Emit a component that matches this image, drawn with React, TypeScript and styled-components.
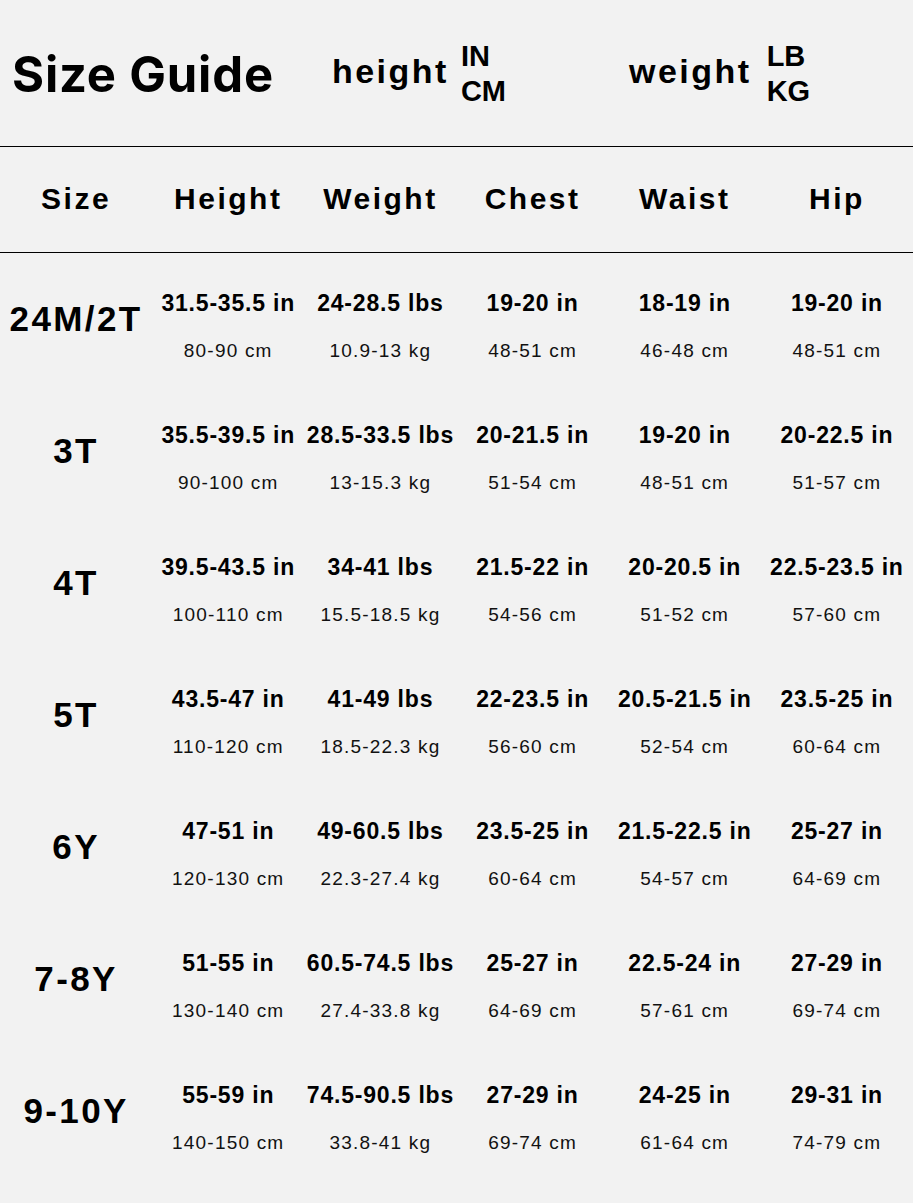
import styled, { createGlobalStyle } from "styled-components";

const GlobalStyle = createGlobalStyle`
  html, body {
    margin: 0;
    padding: 0;
    background: #f2f2f2;
  }
  #root {
    width: 913px;
    min-height: 1203px;
    background: #f2f2f2;
  }
`;

const columns = ["Size", "Height", "Weight", "Chest", "Waist", "Hip"];

const rows = [
  {
    size: "24M/2T",
    values: [
      ["31.5-35.5 in", "80-90 cm"],
      ["24-28.5 lbs", "10.9-13 kg"],
      ["19-20 in", "48-51 cm"],
      ["18-19 in", "46-48 cm"],
      ["19-20 in", "48-51 cm"],
    ],
  },
  {
    size: "3T",
    values: [
      ["35.5-39.5 in", "90-100 cm"],
      ["28.5-33.5 lbs", "13-15.3 kg"],
      ["20-21.5 in", "51-54 cm"],
      ["19-20 in", "48-51 cm"],
      ["20-22.5 in", "51-57 cm"],
    ],
  },
  {
    size: "4T",
    values: [
      ["39.5-43.5 in", "100-110 cm"],
      ["34-41 lbs", "15.5-18.5 kg"],
      ["21.5-22 in", "54-56 cm"],
      ["20-20.5 in", "51-52 cm"],
      ["22.5-23.5 in", "57-60 cm"],
    ],
  },
  {
    size: "5T",
    values: [
      ["43.5-47 in", "110-120 cm"],
      ["41-49 lbs", "18.5-22.3 kg"],
      ["22-23.5 in", "56-60 cm"],
      ["20.5-21.5 in", "52-54 cm"],
      ["23.5-25 in", "60-64 cm"],
    ],
  },
  {
    size: "6Y",
    values: [
      ["47-51 in", "120-130 cm"],
      ["49-60.5 lbs", "22.3-27.4 kg"],
      ["23.5-25 in", "60-64 cm"],
      ["21.5-22.5 in", "54-57 cm"],
      ["25-27 in", "64-69 cm"],
    ],
  },
  {
    size: "7-8Y",
    values: [
      ["51-55 in", "130-140 cm"],
      ["60.5-74.5 lbs", "27.4-33.8 kg"],
      ["25-27 in", "64-69 cm"],
      ["22.5-24 in", "57-61 cm"],
      ["27-29 in", "69-74 cm"],
    ],
  },
  {
    size: "9-10Y",
    values: [
      ["55-59 in", "140-150 cm"],
      ["74.5-90.5 lbs", "33.8-41 kg"],
      ["27-29 in", "69-74 cm"],
      ["24-25 in", "61-64 cm"],
      ["29-31 in", "74-79 cm"],
    ],
  },
];

const App = () => {
  return (
    <>
      <GlobalStyle />
      <Page>
        <TopBar>
          <Title>Size Guide</Title>
          <UnitGroup>
            <UnitLabel>height</UnitLabel>
            <UnitStack>
              <span>IN</span>
              <span>CM</span>
            </UnitStack>
          </UnitGroup>
          <UnitGroup $last>
            <UnitLabel>weight</UnitLabel>
            <UnitStack>
              <span>LB</span>
              <span>KG</span>
            </UnitStack>
          </UnitGroup>
        </TopBar>

        <HeadRow>
          {columns.map((c) => (
            <HeadCell key={c}>{c}</HeadCell>
          ))}
        </HeadRow>

        {rows.map((r) => (
          <Row key={r.size}>
            <SizeCell>{r.size}</SizeCell>
            {r.values.map(([main, sub], i) => (
              <ValueCell key={i}>
                <Main>{main}</Main>
                <Sub>{sub}</Sub>
              </ValueCell>
            ))}
          </Row>
        ))}
      </Page>
    </>
  );
};

export default App;

const Page = styled.div`
  width: 913px;
  color: #000;
  font-family: "Liberation Sans", Arial, sans-serif;
`;

const TopBar = styled.header`
  height: 146px;
  border-bottom: 1px solid #000;
  display: flex;
  align-items: center;
  padding: 0 0 0 12px;
  box-sizing: content-box;
`;

const Title = styled.h1`
  margin: 0 58px 0 0;
  font-family: Inter, Roboto, "Liberation Sans", sans-serif;
  font-weight: 700;
  font-size: 49px;
  line-height: 1;
  letter-spacing: 0.8px;
  white-space: nowrap;
  padding-top: 3px;
`;

const UnitGroup = styled.div<{ $last?: boolean }>`
  display: flex;
  align-items: center;
  gap: ${(p) => (p.$last ? 15 : 12)}px;
  margin-right: ${(p) => (p.$last ? 0 : 123)}px;
`;

const UnitLabel = styled.span`
  font-weight: 700;
  font-size: 34px;
  letter-spacing: 2.5px;
  line-height: 1;
  padding-bottom: 4px;
`;

const UnitStack = styled.div`
  display: flex;
  flex-direction: column;
  font-weight: 700;
  font-size: 29px;
  line-height: 35px;
  padding-top: 2px;
`;

const HeadRow = styled.div`
  display: grid;
  grid-template-columns: repeat(6, minmax(0, 1fr));
  height: 105px;
  border-bottom: 1px solid #000;
  align-items: center;
`;

const HeadCell = styled.div`
  text-align: center;
  font-weight: 700;
  font-size: 30px;
  letter-spacing: 2.5px;
  white-space: nowrap;
  padding-bottom: 2px;
`;

const Row = styled.div`
  display: grid;
  grid-template-columns: repeat(6, minmax(0, 1fr));
  height: 132px;
`;

const SizeCell = styled.div`
  display: flex;
  align-items: center;
  justify-content: center;
  font-weight: 700;
  font-size: 35px;
  letter-spacing: 2.4px;
  white-space: nowrap;
  padding-bottom: 1px;
`;

const ValueCell = styled.div`
  display: flex;
  flex-direction: column;
  align-items: center;
  gap: 24px;
  padding-top: 38px;
  white-space: nowrap;
`;

const Main = styled.span`
  font-weight: 700;
  font-size: 23px;
  line-height: 24px;
  letter-spacing: 0.8px;
`;

const Sub = styled.span`
  font-size: 19px;
  line-height: 24px;
  letter-spacing: 1.2px;
  color: #111;
`;
